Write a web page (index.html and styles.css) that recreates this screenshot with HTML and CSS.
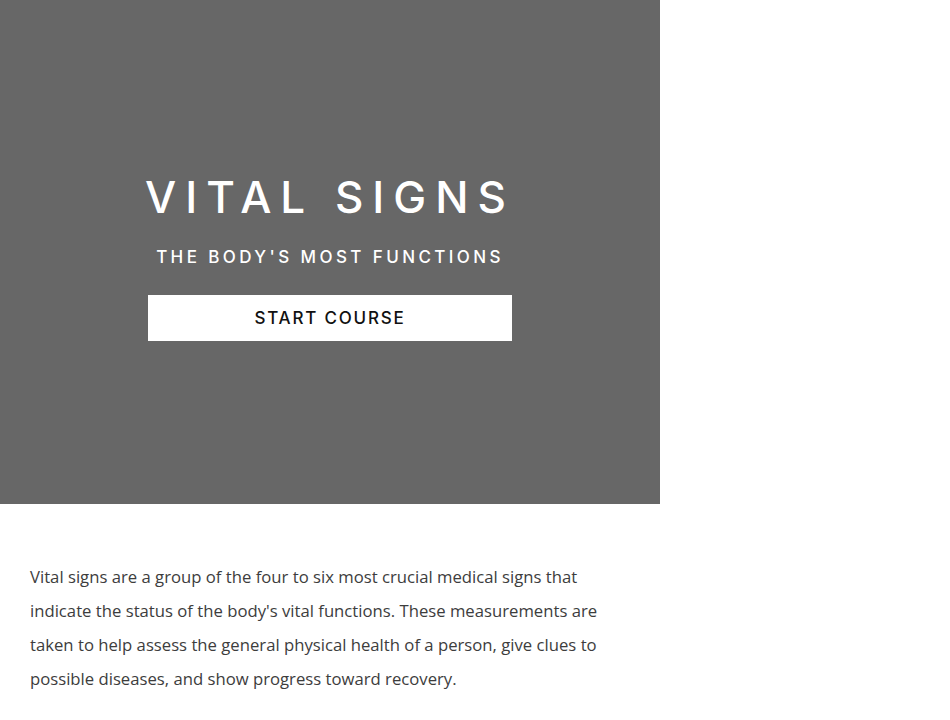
FILE: index.html
```html
<!DOCTYPE html>
<html lang="en">
<head>
<meta charset="utf-8">
<title>Vital Signs</title>
<link rel="stylesheet" href="styles.css">
</head>
<body>
<main class="page">
  <section class="hero">
    <h1 class="hero-title">VITAL SIGNS</h1>
    <p class="hero-sub">THE BODY'S MOST FUNCTIONS</p>
    <a class="hero-btn" href="#">START COURSE</a>
  </section>
  <section class="intro">
    <p>Vital signs are a group of the four to six most crucial medical signs that indicate the status of the body's vital functions. These measurements are taken to help assess the general physical health of a person, give clues to possible diseases, and show progress toward recovery.</p>
  </section>
</main>
</body>
</html>
```
FILE: styles.css
```css
* { box-sizing: border-box; }
html, body { margin: 0; padding: 0; background: #fff; }
body { font-family: "Open Sans", sans-serif; }
.page { width: 660px; }
.hero {
  height: 504px;
  background: #676767;
  display: flex;
  flex-direction: column;
  align-items: center;
  padding-top: 170px;
  font-family: Inter, "Open Sans", sans-serif;
  color: #fff;
}
.hero-title {
  margin: 0;
  font-size: 44px;
  font-weight: 500;
  letter-spacing: 9px;
  line-height: 54px;
}
.hero-sub {
  margin: 22px 0 0;
  font-size: 17px;
  font-weight: 500;
  letter-spacing: 3.4px;
  line-height: 22px;
}
.hero-btn {
  margin-top: 27px;
  width: 364px;
  height: 46px;
  background: #fff;
  color: #111;
  text-decoration: none;
  display: flex;
  align-items: center;
  justify-content: center;
  font-size: 17px;
  font-weight: 500;
  letter-spacing: 1.8px;
}
.intro { padding: 56px 30px 0; }
.intro p {
  margin: 0;
  font-size: 16.7px;
  line-height: 34px;
  color: #3d3d3d;
}
```
